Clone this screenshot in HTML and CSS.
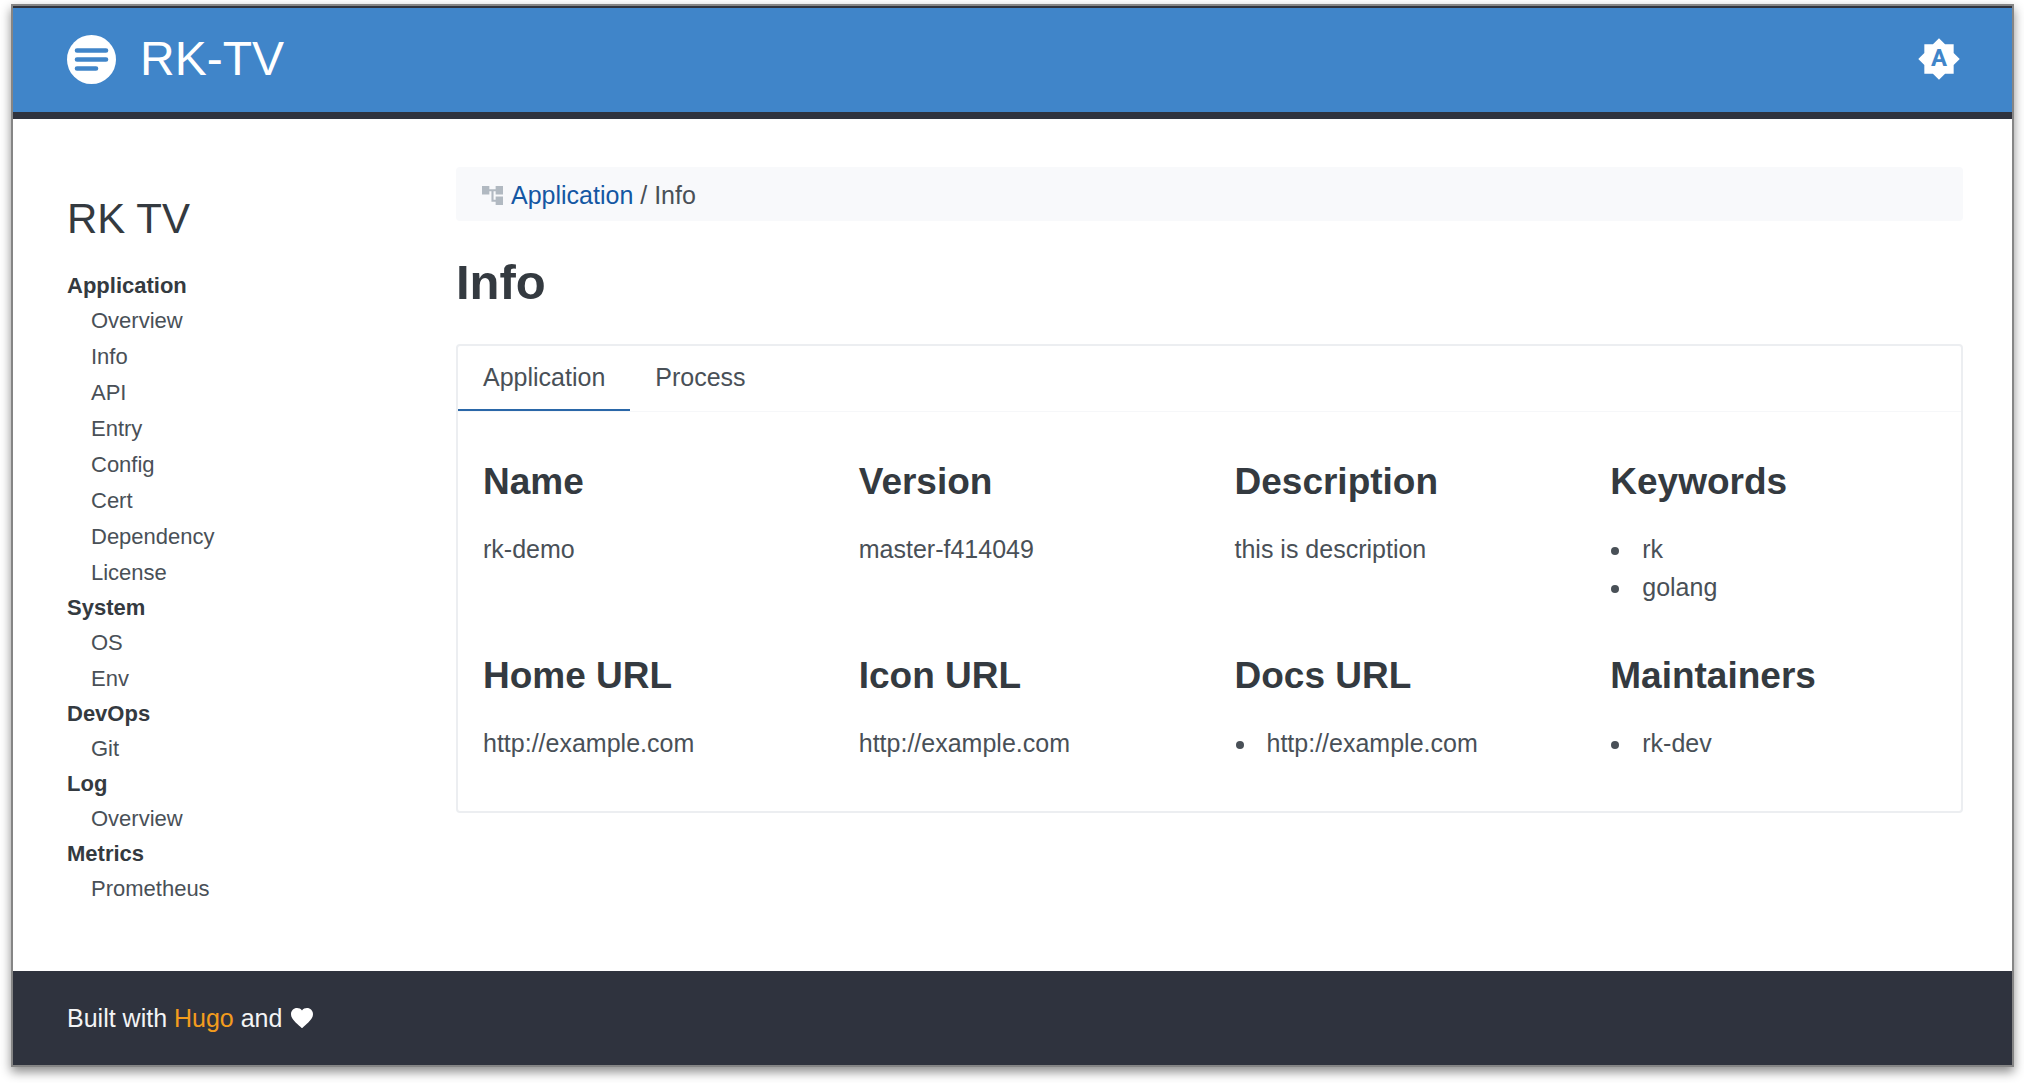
FILE: index.html
```html
<!DOCTYPE html>
<html lang="en">
<head>
<meta charset="utf-8">
<meta name="viewport" content="width=device-width, initial-scale=1">
<title>Info | RK-TV</title>
<link rel="stylesheet" href="styles.css">
</head>
<body>
<div class="window">
  <header class="header">
    <a class="brand" href="#">
      <svg class="brand-icon" viewBox="0 0 49 49" aria-hidden="true">
        <circle cx="24.500" cy="24.500" r="24.500" fill="#fff"/>
        <path d="M10 15.500H39M10 24.500H39M10 33.500H29" stroke="#4085c9" stroke-width="4.600" stroke-linecap="round"/>
      </svg>
      <span>RK-TV</span>
    </a>
    <button class="theme-toggle" type="button" aria-label="Toggle dark mode">
      <svg viewBox="0 0 24 24" aria-hidden="true">
        <path fill="#fff" d="M20 8.690V4h-4.690L12 .690 8.690 4H4v4.690L.690 12 4 15.310V20h4.690L12 23.310 15.310 20H20v-4.690L23.310 12z"/>
        <text class="toggle-letter" x="12" y="16" text-anchor="middle">A</text>
      </svg>
    </button>
  </header>
  <div class="body">
    <nav class="sidebar" aria-label="Main">
      <h2 class="sidebar-title">RK TV</h2>
      <ul class="menu">
        <li><span class="group">Application</span>
          <ul class="submenu">
            <li><a href="#">Overview</a></li>
            <li><a href="#">Info</a></li>
            <li><a href="#">API</a></li>
            <li><a href="#">Entry</a></li>
            <li><a href="#">Config</a></li>
            <li><a href="#">Cert</a></li>
            <li><a href="#">Dependency</a></li>
            <li><a href="#">License</a></li>
          </ul>
        </li>
        <li><span class="group">System</span>
          <ul class="submenu">
            <li><a href="#">OS</a></li>
            <li><a href="#">Env</a></li>
          </ul>
        </li>
        <li><span class="group">DevOps</span>
          <ul class="submenu">
            <li><a href="#">Git</a></li>
          </ul>
        </li>
        <li><span class="group">Log</span>
          <ul class="submenu">
            <li><a href="#">Overview</a></li>
          </ul>
        </li>
        <li><span class="group">Metrics</span>
          <ul class="submenu">
            <li><a href="#">Prometheus</a></li>
          </ul>
        </li>
      </ul>
    </nav>
    <main class="content">
      <nav class="breadcrumb" aria-label="Breadcrumb">
        <svg class="tree-icon" viewBox="2 3 20 18" aria-hidden="true">
          <path fill="#b1b9c1" d="M22 11V3h-7v3H9V3H2v8h7V8h2v10h4v3h7v-8h-7v3h-2V8h2v3z"/>
        </svg>
        <div><a href="#">Application</a> / Info</div>
      </nav>
      <h1 class="page-title">Info</h1>
      <section class="panel">
        <div class="tabs" role="tablist">
          <button class="tab active" type="button" role="tab" aria-selected="true">Application</button>
          <button class="tab" type="button" role="tab" aria-selected="false">Process</button>
        </div>
        <div class="grid">
          <div class="cell"><h3>Name</h3><p>rk-demo</p></div>
          <div class="cell"><h3>Version</h3><p>master-f414049</p></div>
          <div class="cell"><h3>Description</h3><p>this is description</p></div>
          <div class="cell"><h3>Keywords</h3><ul><li>rk</li><li>golang</li></ul></div>
          <div class="cell"><h3>Home URL</h3><p>http://example.com</p></div>
          <div class="cell"><h3>Icon URL</h3><p>http://example.com</p></div>
          <div class="cell"><h3>Docs URL</h3><ul><li>http://example.com</li></ul></div>
          <div class="cell"><h3>Maintainers</h3><ul><li>rk-dev</li></ul></div>
        </div>
      </section>
    </main>
  </div>
  <footer class="footer">
    <span>Built with <a href="#">Hugo</a> and</span>
    <svg class="heart" viewBox="2 3 20 18" role="img" aria-label="love">
      <path fill="#fff" d="M12 21.350l-1.450-1.320C5.400 15.360 2 12.280 2 8.500 2 5.420 4.420 3 7.500 3c1.740 0 3.410.810 4.500 2.090C13.090 3.810 14.760 3 16.500 3 19.580 3 22 5.420 22 8.500c0 3.780-3.400 6.860-8.550 11.540L12 21.350z"/>
    </svg>
  </footer>
</div>
</body>
</html>
```
FILE: styles.css
```css
* {
  box-sizing: border-box;
}

body {
  margin: 0;
  padding: 4px 10px 16px 11px;
  background: #fff;
  color: #495057;
  font-family: "Liberation Sans", Arial, sans-serif;
  font-size: 25px;
  line-height: 38px;
}

a {
  color: inherit;
  text-decoration: none;
}

ul {
  margin: 0;
  padding: 0;
  list-style: none;
}

button {
  padding: 0;
  border: 0;
  background: none;
  color: inherit;
  font: inherit;
  cursor: pointer;
}

.window {
  display: flex;
  flex-direction: column;
  min-height: calc(100vh - 20px);
  border: 2px solid #858585;
  background: #fff;
  box-shadow: 0 5px 10px rgba(0, 0, 0, 0.45);
}

.header {
  display: flex;
  align-items: center;
  justify-content: space-between;
  height: 113px;
  padding: 0 51px 2px 54px;
  border-top: 2px solid #2f333e;
  border-bottom: 7px solid #2f333e;
  background: #4085c9;
  color: #fff;
}

.brand {
  display: flex;
  align-items: center;
  gap: 24px;
  font-size: 48px;
  line-height: 56px;
}

.brand-icon {
  width: 49px;
  height: 49px;
}

.theme-toggle svg {
  display: block;
  width: 44px;
  height: 44px;
}

.toggle-letter {
  fill: #4085c9;
  font-family: Roboto, sans-serif;
  font-size: 13px;
  font-weight: 700;
}

.body {
  display: flex;
  flex: 1;
  padding: 48px 49px 48px 54px;
}

.sidebar {
  flex: 0 0 389px;
  padding-top: 28px;
  font-size: 22px;
}

.sidebar-title {
  margin: 0 0 26px;
  color: #343a40;
  font-size: 42px;
  font-weight: 400;
  line-height: 48px;
}

.group {
  display: block;
  color: #343a40;
  font-weight: 700;
  line-height: 34px;
}

.submenu {
  padding-left: 24px;
  line-height: 36px;
}

.content {
  flex: 1;
  min-width: 0;
}

.breadcrumb {
  display: flex;
  align-items: center;
  gap: 8px;
  padding: 9px 26px 7px;
  border-radius: 4px;
  background: #f8f9fb;
}

.breadcrumb a {
  color: #1457a3;
}

.tree-icon {
  width: 21px;
  height: 19px;
}

.page-title {
  margin: 33px 0;
  color: #343a40;
  font-size: 49px;
  font-weight: 700;
  line-height: 57px;
}

.panel {
  border: 2px solid #eceef1;
  border-radius: 4px;
}

.tabs {
  display: flex;
  border-bottom: 1px solid #f6f7f9;
}

.tab {
  padding: 12px 25px 13px;
  border-bottom: 2px solid transparent;
}

.tab.active {
  border-color: #2a67a8;
}

.grid {
  display: grid;
  grid-template-columns: repeat(4, 1fr);
  row-gap: 45px;
  padding: 45px 0 49px;
}

.cell {
  padding: 0 25px;
}

.cell h3 {
  margin: 0 0 23px;
  color: #343a40;
  font-size: 37px;
  font-weight: 700;
  line-height: 50px;
}

.cell p {
  margin: 0;
}

.cell ul {
  padding-left: 23px;
  list-style: disc;
}

.cell li {
  padding-left: 9px;
}

.footer {
  display: flex;
  align-items: center;
  gap: 9px;
  padding: 28px 54px;
  background: #2f333e;
  color: #f3f4f5;
}

.footer a {
  color: #f39c1d;
}

.heart {
  width: 22px;
  height: 20px;
}
```
